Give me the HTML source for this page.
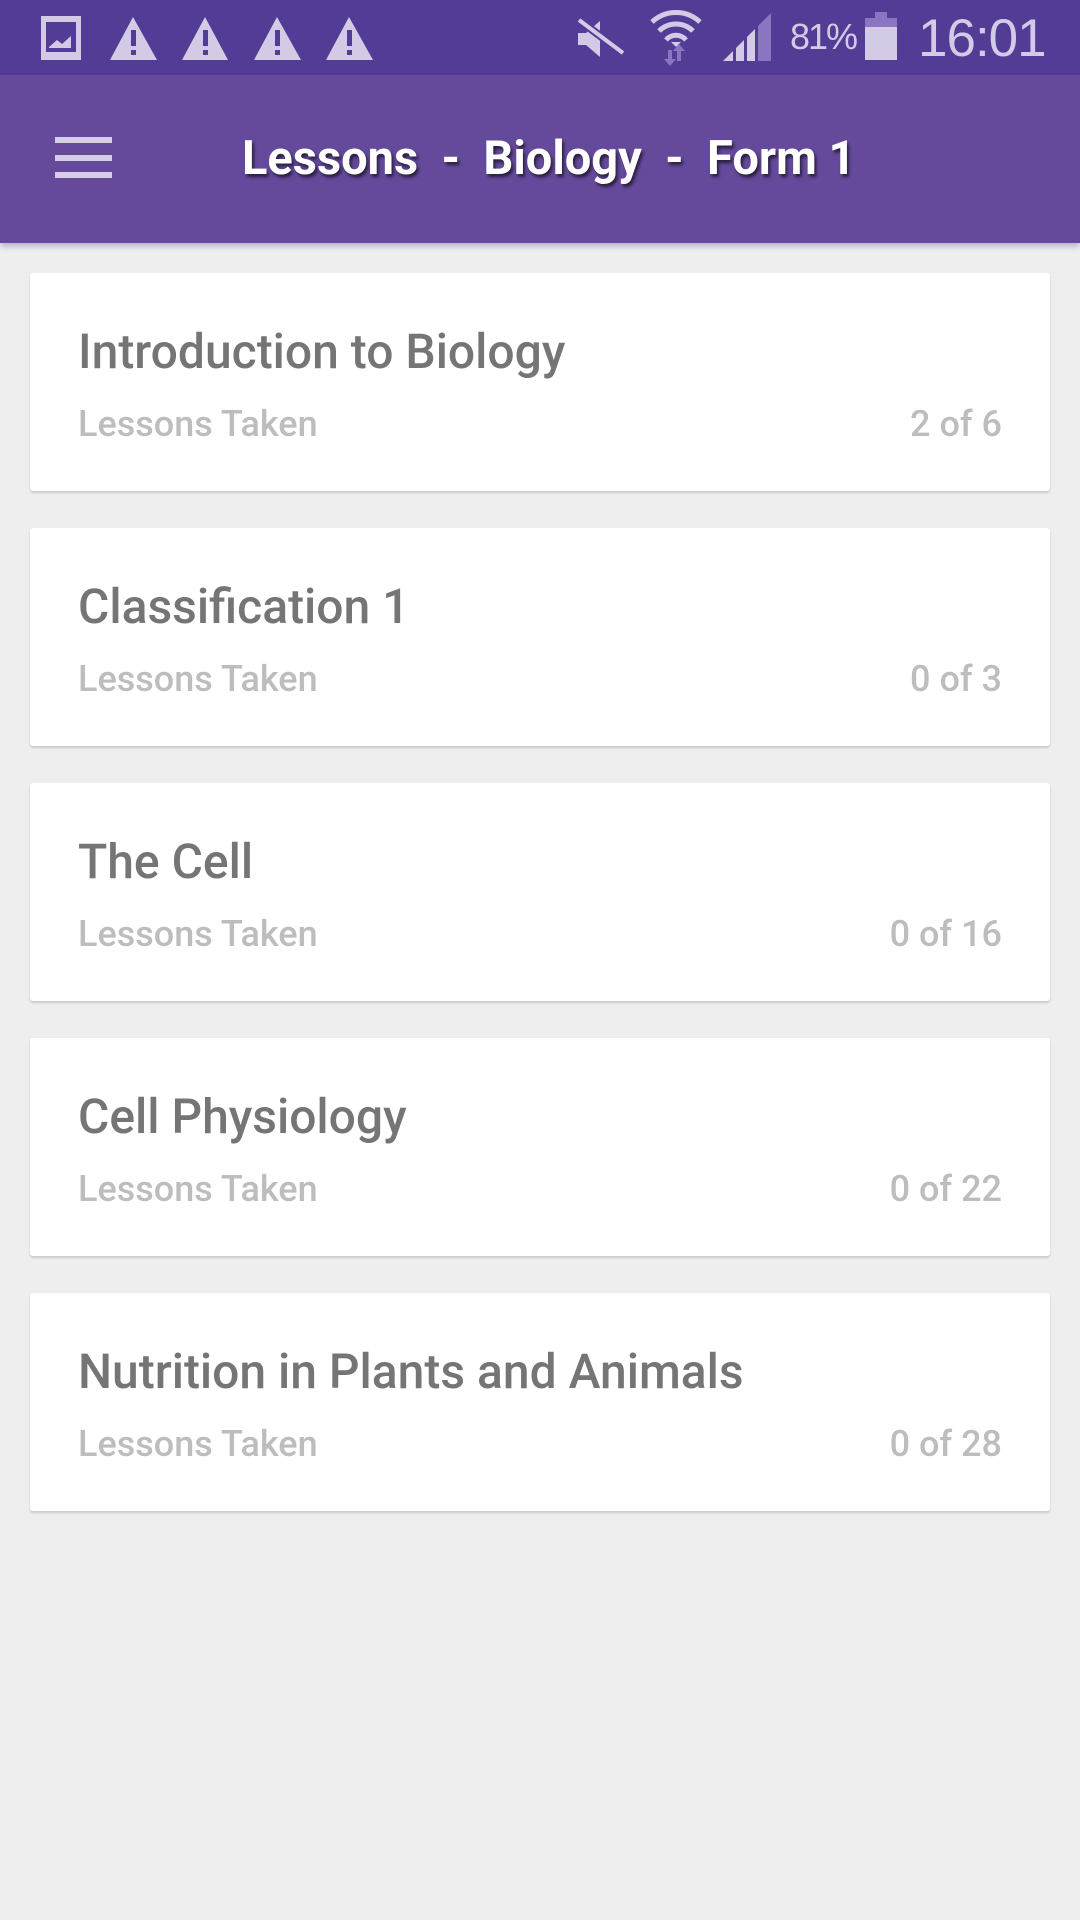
<!DOCTYPE html>
<html><head><meta charset="utf-8"><style>
*{margin:0;padding:0;box-sizing:border-box}
body{width:1080px;height:1920px;background:#eeeeee;font-family:"Roboto","Liberation Sans",sans-serif;position:relative;overflow:hidden}
.sb{position:absolute;left:0;top:0;width:1080px;height:75px;background:#523c96}
.tb{position:absolute;left:0;top:75px;width:1080px;height:168px;background:#654a9c;box-shadow:0 3px 6px rgba(0,0,0,.25)}
.ham{position:absolute;left:55px;width:57px;height:6px;background:#d6cde6}
.title{position:absolute;left:242px;font-size:47px;font-weight:bold;color:#fff;text-shadow:2px 3px 3px rgba(0,0,0,.6);letter-spacing:0px;white-space:pre}
.card{position:absolute;left:30px;width:1020px;height:218px;background:#fff;border-radius:3px;box-shadow:0 2px 2px rgba(0,0,0,.15)}
.card .t{position:absolute;left:48px;top:50px;font-size:48px;font-weight:500;color:#757575;white-space:nowrap}
.card .s{position:absolute;left:48px;top:130px;font-size:36px;font-weight:500;color:#bdbdbd;white-space:nowrap}
.card .n{position:absolute;right:48px;top:130px;font-size:36px;font-weight:500;color:#bdbdbd}
.st{position:absolute;color:#d3cbe6;font-family:"Liberation Sans",sans-serif}
</style></head><body>
<div class="sb">
<svg width="1080" height="75" style="position:absolute;left:0;top:0">
<g fill="#d3cbe6">
<path d="M41 16h40v44h-40zM46 22v30h30v-30z" fill-rule="evenodd"/>
<path d="M49 47l8-7 5 4 9-8v12h-22z"/>
<path d="M133 17l24 43h-47z"/>
<path d="M205 17l23 43h-46z"/>
<path d="M277 17l24 43h-47z"/>
<path d="M349 17l24 43h-47z"/>
</g>
<g fill="#523c96"><rect x="131" y="30" width="5" height="16"/><rect x="131" y="50" width="5" height="5"/>
<rect x="203" y="30" width="5" height="16"/><rect x="203" y="50" width="5" height="5"/>
<rect x="275" y="30" width="5" height="16"/><rect x="275" y="50" width="5" height="5"/>
<rect x="347" y="30" width="5" height="16"/><rect x="347" y="50" width="5" height="5"/></g>
<path d="M578 33h8l14-12v36l-14-12h-8z" fill="#d3cbe6"/>
<path d="M579 20l44 33" stroke="#523c96" stroke-width="8"/>
<path d="M579 20l44 33" stroke="#d3cbe6" stroke-width="4"/>
<g fill="none" stroke="#d3cbe6" stroke-width="5">
<path d="M652 22a35 35 0 0 1 48 0"/><path d="M659 31a24 24 0 0 1 34 0"/><path d="M666 40a13 13 0 0 1 20 0"/>
</g>
<path d="M671 42l5 5 5-5z" fill="#d3cbe6"/>
<path d="M668 50v9h-4l6 7 6-7h-4v-9zM679 44l6 7h-4v10h-4v-10h-4z" fill="#8a75c0"/>
<path d="M723 61l10-10v10zM736 48l8-8v21h-8zM747 37l8-8v32h-8z" fill="#d3cbe6"/>
<path d="M758 26l13-13v48h-13z" fill="#8a75c0"/>
<rect x="865" y="20" width="32" height="40" fill="#d3cbe6"/>
<rect x="865" y="18" width="32" height="9" fill="#8a75c0"/>
<rect x="875" y="12" width="12" height="7" fill="#8a75c0"/>
</svg>
<div class="st" style="left:790px;top:16px;font-size:36px;letter-spacing:-2px">81%</div>
<div class="st" style="left:918px;top:8px;font-size:53px;letter-spacing:-1px">16:01</div>
</div>
<div class="tb">
<div class="ham" style="top:62px"></div>
<div class="ham" style="top:80px"></div>
<div class="ham" style="top:97px"></div>
<div class="title" style="top:56px">Lessons  -  Biology  -  Form 1</div>
</div>
<div class="card" style="top:273px"><div class="t">Introduction to Biology</div><div class="s">Lessons Taken</div><div class="n">2 of 6</div></div>
<div class="card" style="top:528px"><div class="t">Classification 1</div><div class="s">Lessons Taken</div><div class="n">0 of 3</div></div>
<div class="card" style="top:783px"><div class="t">The Cell</div><div class="s">Lessons Taken</div><div class="n">0 of 16</div></div>
<div class="card" style="top:1038px"><div class="t">Cell Physiology</div><div class="s">Lessons Taken</div><div class="n">0 of 22</div></div>
<div class="card" style="top:1293px"><div class="t">Nutrition in Plants and Animals</div><div class="s">Lessons Taken</div><div class="n">0 of 28</div></div>
</body></html>
